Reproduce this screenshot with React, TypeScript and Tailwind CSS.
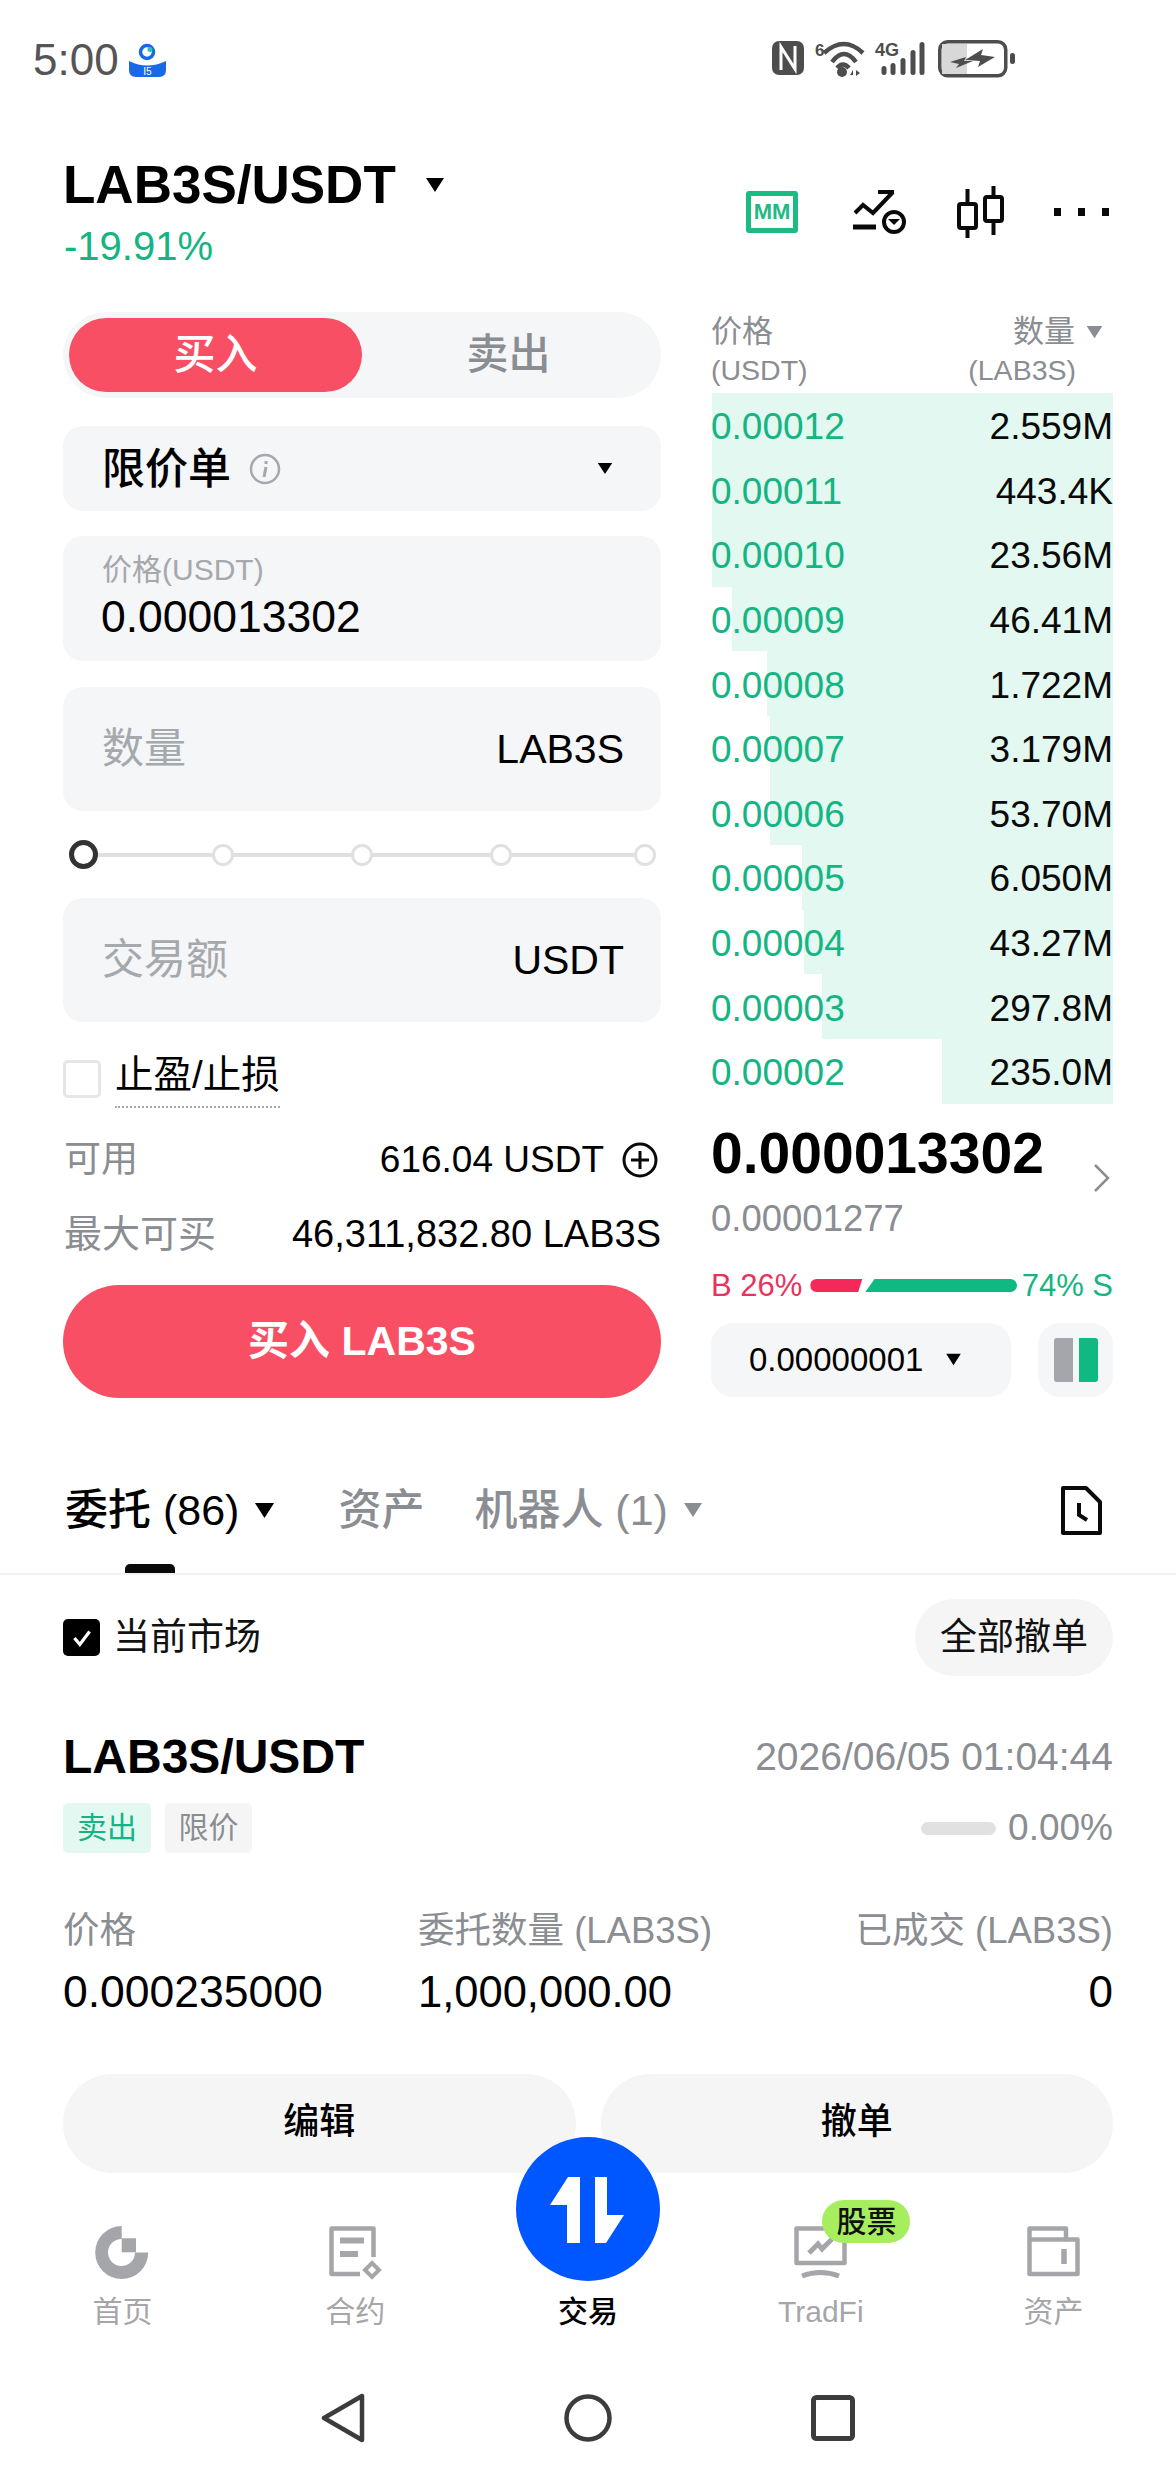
import React from "react";

const book = [
  { price: "0.00012", size: "2.559M", bar: 401 },
  { price: "0.00011", size: "443.4K", bar: 401 },
  { price: "0.00010", size: "23.56M", bar: 401 },
  { price: "0.00009", size: "46.41M", bar: 381 },
  { price: "0.00008", size: "1.722M", bar: 346 },
  { price: "0.00007", size: "3.179M", bar: 343 },
  { price: "0.00006", size: "53.70M", bar: 343 },
  { price: "0.00005", size: "6.050M", bar: 311 },
  { price: "0.00004", size: "43.27M", bar: 309 },
  { price: "0.00003", size: "297.8M", bar: 291 },
  { price: "0.00002", size: "235.0M", bar: 171 },
];

function Caret({ className }: { className: string }) {
  return (
    <svg viewBox="0 0 20 16" className={className} fill="currentColor">
      <path d="M1 1h18L10 15z" />
    </svg>
  );
}

function StatusBar() {
  return (
    <div className="h-[156px] flex items-start pt-[38px] pl-[33px]">
      <span className="text-[44px] leading-[44px] text-[#555]">5:00</span>
      <svg viewBox="0 0 37 34" className="w-[37px] h-[34px] ml-[10px] mt-[5px]">
        <path d="M0 18Q18 27 37 18V27Q37 34 30 34H7Q0 34 0 27z" fill="#1769e8" />
        <circle cx="18" cy="9" r="6.500" fill="none" stroke="#1769e8" strokeWidth="3.500" />
        <circle cx="21" cy="6.500" r="2.500" fill="#22c7b0" />
        <text x="18.500" y="32" fontSize="10" textAnchor="middle" fill="#fff">I5</text>
      </svg>
      <div className="ml-auto mr-[160px] mt-[3px] flex items-start text-[#4d4d4d]">
        <svg viewBox="0 0 32 34" className="w-[32px] h-[34px]">
          <rect width="32" height="34" rx="7" fill="currentColor" />
          <path d="M9 29V6l14 22V5" fill="none" stroke="#fff" strokeWidth="3" />
        </svg>
        <div className="relative w-[52px] h-[36px] ml-[11px]">
          <span className="absolute left-0 top-[1px] text-[17px] leading-[17px] font-bold">6</span>
          <svg viewBox="0 0 52 36" className="w-[52px] h-[36px]" fill="none" stroke="currentColor" strokeWidth="4.500">
            <path d="M9 12Q29-6 48 12M17 21Q29 5 41 21M22 27Q28 20 34 27" />
            <circle cx="27" cy="31" r="5" fill="currentColor" stroke="none" />
            <path d="M35 34l3-5v5zM41 29l4 3-4 3z" fill="currentColor" stroke="none" />
          </svg>
        </div>
        <div className="relative w-[54px] h-[36px] ml-[6px]">
          <span className="absolute left-[2px] top-0 text-[18px] leading-[18px] font-bold">4G</span>
          <svg viewBox="0 0 54 36" className="w-[54px] h-[36px]" fill="currentColor">
            <rect x="8.500" y="25" width="5" height="9" rx="2.500" />
            <rect x="17.500" y="22" width="5" height="12" rx="2.500" />
            <rect x="27.500" y="17" width="5" height="17" rx="2.500" />
            <rect x="37.500" y="9" width="5" height="25" rx="2.500" />
            <rect x="46.500" y="1" width="5" height="33" rx="2.500" />
          </svg>
        </div>
        <svg viewBox="0 0 78 38" className="w-[78px] h-[38px] ml-[11px] -mt-[1px]">
          <rect x="1.750" y="1.750" width="66" height="34" rx="8" fill="#fff" stroke="currentColor" strokeWidth="3.500" />
          <path d="M4 4h25v30H4z" fill="#d8d8d8" />
          <path d="M12 22l16-5-2 4h9l-17 7 3-4zM27 20l18-11-2 6 14 2-17 10 2-6z" fill="currentColor" />
          <rect x="72" y="13" width="5" height="11" rx="2.500" fill="currentColor" />
        </svg>
      </div>
    </div>
  );
}

function PairHeader() {
  return (
    <div className="flex items-center pl-[63px] pr-[67px]">
      <div>
        <div className="flex items-center h-[58px]">
          <span className="text-[53px] leading-[58px] font-bold text-black">LAB3S/USDT</span>
          <Caret className="w-[22px] h-[16px] ml-[28px] text-black" />
        </div>
        <div className="h-[44px] mt-[10px] pl-[1px] text-[40px] leading-[44px] text-[#14b583]">-19.91%</div>
      </div>
      <div className="ml-auto flex items-center">
        <div className="w-[52px] h-[42px] rounded-[3px] border-[5px] border-[#1cbb84] flex items-center justify-center text-[22px] leading-[22px] font-bold text-[#1cbb84]">MM</div>
        <svg viewBox="0 0 54 44" className="w-[54px] h-[44px] ml-[55px]" fill="none" stroke="#0a0a0a" strokeWidth="4">
          <path d="M2 23l8-8 10 8L40 2M25 2h16" />
          <path d="M0 37h23" strokeWidth="5" />
          <circle cx="41" cy="32" r="10" />
          <path d="M35 29h12l-6 6z" fill="#0a0a0a" stroke="none" />
        </svg>
        <svg viewBox="0 0 47 52" className="w-[47px] h-[52px] ml-[50px]" fill="none" stroke="#0a0a0a" strokeWidth="4">
          <rect x="2" y="18" width="17" height="24" rx="2" />
          <path d="M10.500 3v15M10.500 42v10" />
          <rect x="28" y="11" width="17" height="24" rx="2" />
          <path d="M36.500 0v11M36.500 35v14" />
        </svg>
        <div className="flex gap-[17px] ml-[50px]">
          <span className="w-[7px] h-[8px] bg-[#0a0a0a]" />
          <span className="w-[7px] h-[8px] bg-[#0a0a0a]" />
          <span className="w-[7px] h-[8px] bg-[#0a0a0a]" />
        </div>
      </div>
    </div>
  );
}

function Field({ label, unit }: { label: string; unit: string }) {
  return (
    <div className="h-[124px] rounded-[20px] bg-[#f5f6f7] flex items-center justify-between pl-[39px] pr-[37px]">
      <span className="text-[42px] leading-[50px] text-[#a5a8ac]">{label}</span>
      <span className="text-[41px] leading-[50px] text-black">{unit}</span>
    </div>
  );
}

function OrderForm() {
  return (
    <div className="w-[598px]">
      <div className="h-[86px] rounded-full bg-[#f5f6f7] flex p-[6px]">
        <div className="w-[293px] rounded-full bg-[#f84f64] text-white text-[42px] leading-[74px] text-center font-medium">买入</div>
        <div className="flex-1 text-[#8a8d91] text-[42px] leading-[74px] text-center font-medium">卖出</div>
      </div>
      <div className="h-[85px] mt-[28px] rounded-[20px] bg-[#f5f6f7] flex items-center pl-[39px] pr-[48px]">
        <span className="text-[43px] leading-[50px] font-medium text-black">限价单</span>
        <svg viewBox="0 0 32 32" className="w-[32px] h-[32px] ml-[18px]" fill="none" stroke="#a5a8ac" strokeWidth="2.500">
          <circle cx="16" cy="16" r="14" />
          <path d="M17 14l-2 10M17 8v3" strokeWidth="3" />
        </svg>
        <Caret className="w-[16px] h-[13px] ml-auto text-black" />
      </div>
      <div className="h-[125px] mt-[25px] rounded-[20px] bg-[#f5f6f7] pl-[39px] pt-[16px]">
        <div className="text-[30px] leading-[36px] text-[#a5a8ac]">价格(USDT)</div>
        <div className="text-[44.500px] leading-[50px] mt-[4px] -ml-[1px] text-black">0.000013302</div>
      </div>
      <div className="mt-[26px]">
        <Field label="数量" unit="LAB3S" />
      </div>
      <div className="h-[87px] flex items-center pl-[6px]">
        <span className="w-[29px] h-[29px] rounded-full bg-white border-[5px] border-[#333]" />
        <span className="w-[114px] h-[4px] bg-[#e0e0e0]" />
        <span className="w-[22px] h-[22px] rounded-full bg-white border-[3px] border-[#e0e0e0]" />
        <span className="w-[117px] h-[4px] bg-[#e0e0e0]" />
        <span className="w-[22px] h-[22px] rounded-full bg-white border-[3px] border-[#e0e0e0]" />
        <span className="w-[117px] h-[4px] bg-[#e0e0e0]" />
        <span className="w-[22px] h-[22px] rounded-full bg-white border-[3px] border-[#e0e0e0]" />
        <span className="w-[122px] h-[4px] bg-[#e0e0e0]" />
        <span className="w-[22px] h-[22px] rounded-full bg-white border-[3px] border-[#e0e0e0]" />
      </div>
      <Field label="交易额" unit="USDT" />
      <div className="flex items-start mt-[36px]">
        <span className="w-[38px] h-[38px] mt-[2px] rounded-[5px] border-[3px] border-[#e5e6e8]" />
        <span className="ml-[14px] h-[50px] text-[38.500px] leading-[34px] text-black border-b-2 border-dotted border-[#a5a8ac]">止盈/止损</span>
      </div>
      <div className="h-[40px] mt-[32px] flex items-center pl-[1px] text-[37px] leading-[40px]">
        <span className="text-[#8a8d91]">可用</span>
        <span className="ml-auto text-black">616.04 USDT</span>
        <svg viewBox="0 0 36 36" className="w-[36px] h-[36px] ml-[18px] mr-[3px]" fill="none" stroke="#0a0a0a" strokeWidth="3">
          <circle cx="18" cy="18" r="16" />
          <path d="M18 9v18M9 18h18" />
        </svg>
      </div>
      <div className="h-[40px] mt-[34px] flex items-center justify-between pl-[1px] text-[38px] leading-[40px]">
        <span className="text-[#8a8d91]">最大可买</span>
        <span className="text-black">46,311,832.80 LAB3S</span>
      </div>
      <div className="h-[113px] mt-[31px] rounded-full bg-[#f84f64] text-white text-[41px] leading-[113px] text-center font-bold">买入 LAB3S</div>
    </div>
  );
}

function OrderBook() {
  return (
    <div className="w-[402px] ml-[50px]">
      <div className="flex justify-between h-[81px] text-[#8a8d91] text-[28.500px] leading-[39px]">
        <div>
          <div className="text-[31px]">价格</div>
          <div>(USDT)</div>
        </div>
        <div className="text-right">
          <div className="text-[31px] flex items-center justify-end">
            数量
            <Caret className="w-[19px] h-[14px] ml-[10px] mr-[9px] text-[#8a8d91]" />
          </div>
          <div className="pr-[37px]">(LAB3S)</div>
        </div>
      </div>
      {book.map((row) => (
        <div key={row.price} className="relative h-[64.600px] flex items-center justify-between pt-[4px] text-[37px] leading-[44px]">
          <div className="absolute right-0 top-0 bottom-0 bg-[#e3f8f0]" style={{ width: row.bar }} />
          <span className="relative text-[#14b583]">{row.price}</span>
          <span className="relative text-[#0a0a0a]">{row.size}</span>
        </div>
      ))}
      <div className="flex mt-[22px]">
        <div>
          <div className="text-[57px] leading-[55px] font-bold text-black">0.000013302</div>
          <div className="text-[36.500px] leading-[44px] mt-[16px] text-[#8a8d91]">0.00001277</div>
        </div>
        <svg viewBox="0 0 16 28" className="w-[16px] h-[28px] ml-auto mr-[3px] mt-[38px]" fill="none" stroke="#8a8d91" strokeWidth="2.500">
          <path d="M1 1l13 13L1 27" />
        </svg>
      </div>
      <div className="h-[30px] mt-[30px] flex items-center text-[31px] leading-[30px]">
        <span className="text-[#e8325f]">B 26%</span>
        <span className="w-[52px] h-[13px] ml-[8px] bg-[#f5285a] rounded-l-full [clip-path:polygon(0_0,100%_0,92%_100%,0_100%)]" />
        <span className="w-[152px] h-[13px] ml-[3px] bg-[#10b981] rounded-r-full [clip-path:polygon(6%_0,100%_0,100%_100%,0_100%)]" />
        <span className="ml-auto text-[#14b583]">74% S</span>
      </div>
      <div className="flex justify-between mt-[22px]">
        <div className="w-[300px] h-[74px] rounded-[22px] bg-[#f5f6f7] flex items-center pl-[38px]">
          <span className="text-[33px] leading-[40px] text-black">0.00000001</span>
          <Caret className="w-[17px] h-[13px] ml-[22px] text-black" />
        </div>
        <div className="w-[75px] h-[74px] rounded-[22px] bg-[#f5f6f7] flex items-center justify-center gap-[6px]">
          <span className="w-[19px] h-[44px] rounded-l-[3px] bg-[#a5a6ab]" />
          <span className="w-[19px] h-[44px] rounded-r-[3px] bg-[#10b981]" />
        </div>
      </div>
    </div>
  );
}

function Tabs() {
  return (
    <div className="mt-[87px]">
      <div className="h-[50px] flex items-center pl-[65px] pr-[74px] text-[43px] leading-[50px]">
        <span className="font-medium text-black">委托 (86)</span>
        <Caret className="w-[23px] h-[17px] ml-[14px] text-black" />
        <span className="ml-[62px] text-[#8a8d91] font-medium">资产</span>
        <span className="ml-[50px] text-[#8a8d91] font-medium">机器人 (1)</span>
        <Caret className="w-[22px] h-[16px] ml-[14px] text-[#8a8d91]" />
        <svg viewBox="0 0 41 49" className="w-[41px] h-[49px] ml-auto" fill="none" stroke="#0a0a0a" strokeWidth="4">
          <path d="M2 2h23l14 14v31H2z" strokeLinejoin="round" />
          <path d="M18 17v12l8 5" />
        </svg>
      </div>
      <div className="w-[50px] h-[9px] ml-[125px] mt-[29px] rounded-t-[5px] bg-[#0a0a0a]" />
      <div className="h-[2px] bg-[#f2f2f2]" />
    </div>
  );
}

function OpenOrder() {
  return (
    <div className="px-[63px]">
      <div className="flex items-center justify-between pt-[24px]">
        <div className="flex items-center">
          <span className="w-[37px] h-[37px] rounded-[5px] bg-black flex items-center justify-center">
            <svg viewBox="0 0 24 24" className="w-[26px] h-[26px]" fill="none" stroke="#fff" strokeWidth="3">
              <path d="M5 12l5 6 9-12" />
            </svg>
          </span>
          <span className="ml-[13px] text-[37px] leading-[44px] text-[#111]">当前市场</span>
        </div>
        <span className="w-[198px] h-[77px] rounded-full bg-[#f5f5f5] text-[37px] leading-[77px] text-center text-[#111]">全部撤单</span>
      </div>
      <div className="h-[52px] mt-[55px] flex items-center justify-between">
        <span className="text-[48px] leading-[52px] font-bold text-black">LAB3S/USDT</span>
        <span className="text-[39px] leading-[52px] text-[#8a8d91]">2026/06/05 01:04:44</span>
      </div>
      <div className="h-[50px] mt-[20px] flex items-center">
        <span className="w-[88px] h-[50px] rounded-[5px] bg-[#e3f8f0] text-[#14b583] text-[30px] leading-[50px] text-center">卖出</span>
        <span className="w-[87px] h-[50px] ml-[14px] rounded-[5px] bg-[#f5f5f5] text-[#8a8d91] text-[30px] leading-[50px] text-center">限价</span>
        <span className="w-[75px] h-[13px] ml-auto rounded-full bg-[#e0e1e3]" />
        <span className="ml-[12px] text-[37px] leading-[50px] text-[#8a8d91]">0.00%</span>
      </div>
      <div className="h-[40px] mt-[58px] flex text-[36.500px] leading-[40px] text-[#8a8d91]">
        <span className="w-[355px]">价格</span>
        <span>委托数量 (LAB3S)</span>
        <span className="ml-auto">已成交 (LAB3S)</span>
      </div>
      <div className="h-[48px] mt-[17px] flex leading-[48px] text-black">
        <span className="w-[355px] text-[44.500px]">0.000235000</span>
        <span className="text-[43.500px]">1,000,000.00</span>
        <span className="ml-auto text-[44px]">0</span>
      </div>
      <div className="flex gap-[25px] mt-[58px]">
        <span className="flex-1 h-[99px] rounded-[50px] bg-[#f5f5f5] text-[36px] leading-[96px] text-center font-medium text-black">编辑</span>
        <span className="flex-1 h-[99px] rounded-[50px] bg-[#f5f5f5] text-[36px] leading-[96px] text-center font-medium text-black">撤单</span>
      </div>
    </div>
  );
}

function BottomNav() {
  const label = "mt-[14px] text-[30px] leading-[36px] text-[#a5a6a9]";
  return (
    <div className="grid grid-cols-5 px-[6px] mt-[53px]">
      <div className="flex flex-col items-center">
        <svg viewBox="0 0 54 54" className="w-[54px] h-[54px]" fill="#a5a6a9">
          <path d="M26.700 0A26.500 26.500 0 1 0 53.200 26.500H40A13.500 13.500 0 1 1 26.700 13z" />
          <rect x="26.700" y="12.300" width="14.300" height="14" />
        </svg>
        <span className={label}>首页</span>
      </div>
      <div className="flex flex-col items-center">
        <svg viewBox="0 0 53 54" className="w-[53px] h-[54px]" fill="none" stroke="#a5a6a9" strokeWidth="4.500">
          <path d="M31 48H2.500V2.500h42V31" strokeLinejoin="round" />
          <path d="M11 14.500h24M11 28h18" strokeWidth="6" />
          <path d="M43 37l7 7-7 7-7-7z" strokeWidth="4" />
        </svg>
        <span className={label}>合约</span>
      </div>
      <div className="relative flex flex-col items-center">
        <div className="absolute -top-[89px] w-[144px] h-[144px] rounded-full bg-[#0057ff] flex items-center justify-center">
          <svg viewBox="0 0 144 144" className="w-[144px] h-[144px]" fill="#fff">
            <path d="M64 40v66H51V68H34L52 40z" />
            <path d="M79 106V40h12v38h17l-18 28z" />
          </svg>
        </div>
        <span className="h-[54px]" />
        <span className="mt-[14px] text-[30px] leading-[36px] font-medium text-black">交易</span>
      </div>
      <div className="relative flex flex-col items-center">
        <svg viewBox="0 0 53 54" className="w-[53px] h-[54px]" fill="none" stroke="#a5a6a9" strokeWidth="4.500">
          <path d="M2.500 37V2.500h48V37z" strokeLinejoin="round" />
          <path d="M15 27l9-9 4 5 10-10" strokeWidth="5" />
          <path d="M8 50Q26 43 45 50" strokeWidth="5" />
        </svg>
        <span className="absolute -top-[26px] left-[118px] w-[88px] h-[43px] rounded-full bg-[#a6ee5e] text-[30px] leading-[43px] text-center font-medium text-[#111]">股票</span>
        <span className={label}>TradFi</span>
      </div>
      <div className="flex flex-col items-center">
        <svg viewBox="0 0 53 54" className="w-[53px] h-[54px]" fill="none" stroke="#a5a6a9" strokeWidth="4.500">
          <path d="M2.500 48V2.500H39v11h11.500V48z" strokeLinejoin="round" />
          <path d="M2.500 13.500H39" />
          <path d="M37 23v15" strokeWidth="5.500" />
        </svg>
        <span className={label}>资产</span>
      </div>
    </div>
  );
}

function SystemNav() {
  return (
    <div className="flex justify-center items-center gap-[199px] mt-[63px]">
      <svg viewBox="0 0 44 50" className="w-[44px] h-[50px]" fill="none" stroke="#3c3c3c" strokeWidth="4.500" strokeLinejoin="round">
        <path d="M41 3v44L3 25z" />
      </svg>
      <svg viewBox="0 0 48 48" className="w-[48px] h-[48px]" fill="none" stroke="#3c3c3c" strokeWidth="4.500">
        <circle cx="24" cy="24" r="21.500" />
      </svg>
      <svg viewBox="0 0 44 46" className="w-[44px] h-[46px]" fill="none" stroke="#3c3c3c" strokeWidth="5">
        <rect x="2.500" y="2.500" width="39" height="41" rx="3" />
      </svg>
    </div>
  );
}

export default function App() {
  return (
    <div className="w-[1176px] h-[2480px] overflow-hidden bg-white [font-family:'Liberation_Sans','Noto_Sans_CJK_SC',sans-serif]">
      <StatusBar />
      <PairHeader />
      <div className="flex pl-[63px] mt-[44px]">
        <OrderForm />
        <OrderBook />
      </div>
      <Tabs />
      <OpenOrder />
      <BottomNav />
      <SystemNav />
    </div>
  );
}
